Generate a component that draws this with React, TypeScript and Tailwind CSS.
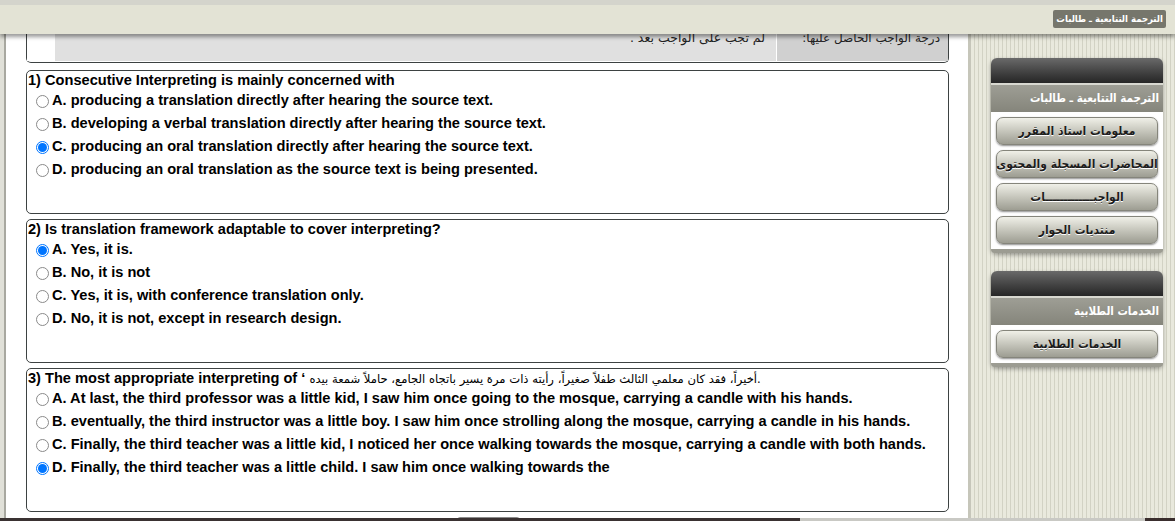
import React from "react";

type Q = { title: React.ReactNode; options: string[]; checked: number };

const questions: Q[] = [
  {
    title: "1) Consecutive Interpreting is mainly concerned with",
    options: [
      "A. producing a translation directly after hearing the source text.",
      "B. developing a verbal translation directly after hearing the source text.",
      "C. producing an oral translation directly after hearing the source text.",
      "D. producing an oral translation as the source text is being presented.",
    ],
    checked: 2,
  },
  {
    title: "2) Is translation framework adaptable to cover interpreting?",
    options: [
      "A. Yes, it is.",
      "B. No, it is not",
      "C. Yes, it is, with conference translation only.",
      "D. No, it is not, except in research design.",
    ],
    checked: 0,
  },
  {
    title: (
      <>
        3) The most appropriate interpreting of ‘{" "}
        <span className="font-normal text-[11.6px] font-['DejaVu_Sans',sans-serif]">
          أخيراً، فقد كان معلمي الثالث طفلاً صغيراً، رأيته ذات مرة يسير باتجاه الجامع، حاملاً شمعة بيده.
        </span>
      </>
    ),
    options: [
      "A. At last, the third professor was a little kid, I saw him once going to the mosque, carrying a candle with his hands.",
      "B. eventually, the third instructor was a little boy. I saw him once strolling along the mosque, carrying a candle in his hands.",
      "C. Finally, the third teacher was a little kid, I noticed her once walking towards the mosque, carrying a candle with both hands.",
      "D. Finally, the third teacher was a little child. I saw him once walking towards the",
    ],
    checked: 3,
  },
];

function Radio({ checked }: { checked: boolean }) {
  return checked ? (
    <span className="w-[13px] h-[13px] rounded-full border border-[#0075ff] bg-white flex items-center justify-center shrink-0">
      <span className="w-[9px] h-[9px] rounded-full bg-[#0075ff]" />
    </span>
  ) : (
    <span className="w-[13px] h-[13px] rounded-full border border-[#8a8a8a] bg-white shrink-0" />
  );
}

function QuestionBox({ q }: { q: Q }) {
  return (
    <div className="w-[923px] h-[144px] ml-[26px] border border-[#3d4242] rounded-[5px] bg-white">
      <div className="pl-[1px] leading-[18px] h-[18px] text-[14.6px] font-bold text-black whitespace-nowrap">
        {q.title}
      </div>
      {q.options.map((o, i) => (
        <div key={i} className="h-[23px] flex items-center pl-[9px] pt-[1px] text-[14.6px] font-bold text-black whitespace-nowrap">
          <Radio checked={i === q.checked} />
          <span className="ml-[3px]">{o}</span>
        </div>
      ))}
    </div>
  );
}

function SideButton({ label }: { label: string }) {
  return (
    <div className="h-[28px] rounded-[7px] border border-[#85857b] bg-linear-to-b from-[#f0f0e8] via-[#c6c6bc] to-[#9d9d92] shadow-[0_1px_2px_rgba(0,0,0,0.45)] flex items-center justify-center text-[12px] font-bold text-[#1c1c1c] [text-shadow:0_1px_0_#ffffff] whitespace-nowrap font-['DejaVu_Sans_Condensed','DejaVu_Sans',sans-serif]">
      {label}
    </div>
  );
}

function Panel({ title, buttons }: { title: string; buttons: string[] }) {
  return (
    <div className="w-[172px] rounded-[6px] shadow-[0_2px_4px_rgba(0,0,0,0.35)]">
      <div className="h-[25px] rounded-t-[6px] bg-linear-to-b from-[#6a6a6a] to-[#262626]" />
      <div className="h-[2px] bg-[#d8d8d0]" />
      <div dir="rtl" className="h-[27px] bg-linear-to-b from-[#9e9e95] to-[#85857b] flex items-center pr-[4px] text-[11.5px] font-bold text-white whitespace-nowrap font-['DejaVu_Sans_Condensed','DejaVu_Sans',sans-serif]">
        {title}
      </div>
      <div dir="rtl" className="bg-white px-[5px] pt-[5px] pb-[5px] flex flex-col gap-[5px]">
        {buttons.map((b) => (
          <SideButton key={b} label={b} />
        ))}
      </div>
      <div className="h-[4px] bg-[#9c9c92] rounded-b-[6px]" />
    </div>
  );
}

export default function App() {
  return (
    <div className="w-[1175px] h-[521px] overflow-hidden flex flex-col bg-white font-['Liberation_Sans','DejaVu_Sans',sans-serif]">
      {/* fixed header overlay */}
      <div className="fixed top-0 left-0 w-[1175px] h-[34px] border-t-[5px] border-[#d4d4cc] bg-[#e3e3d5] shadow-[0_3px_4px_rgba(0,0,0,0.4)] z-10 flex items-start justify-end pr-[9px] pt-[5px]">
        <div dir="rtl" className="h-[18px] px-[3px] bg-[#76766c] rounded-[2px] text-white text-[9.5px] font-bold leading-[18px] whitespace-nowrap font-['DejaVu_Sans_Condensed','DejaVu_Sans',sans-serif]">
          الترجمة التتابعية ـ طالبات
        </div>
      </div>

      <div className="flex flex-1 min-h-0">
        {/* main column */}
        <div className="w-[968px] shrink-0 bg-white shadow-[inset_4px_0_0_#e0e0d8,inset_6px_0_0_#a8a8a0] overflow-hidden">
          <div className="w-[923px] h-[63px] ml-[26px] border border-t-0 border-[#3d4242] rounded-b-[5px] flex pb-[1px]">
            <div className="w-[28px] bg-white" />
            <div dir="rtl" className="flex-1 bg-[#e0e0e0] pt-[30px] pr-[11px] text-[12.5px] leading-[16px] text-[#222] font-['DejaVu_Sans',sans-serif] whitespace-nowrap">
              لم تجب على الواجب بعد .
            </div>
            <div className="w-[1px] bg-white" />
            <div dir="rtl" className="w-[171px] bg-[#d0d0d0] pt-[30px] pr-[8px] text-[12px] leading-[16px] text-[#222] font-['DejaVu_Sans',sans-serif] whitespace-nowrap overflow-hidden">
              درجة الواجب الحاصل عليها:
            </div>
          </div>
          <div className="mt-[7px] flex flex-col gap-[5px]">
            {questions.map((q, i) => (
              <QuestionBox key={i} q={q} />
            ))}
          </div>
          <div className="mt-[5px] ml-[457px] w-[63px] h-[10px] rounded-t-[3px] border border-[#8a8a8a] bg-[#f4f4f4]" />
        </div>

        {/* sidebar */}
        <div className="flex-1 border-l-[3px] border-[#c6c6ba] bg-[repeating-linear-gradient(90deg,#e9e9dd_0px,#e9e9dd_3px,#d2d2c4_3px,#d2d2c4_4px)] pl-[20px] pt-[58px] flex flex-col gap-[18px]">
          <Panel
            title="الترجمة التتابعية ـ طالبات"
            buttons={["معلومات استاذ المقرر", "المحاضرات المسجلة والمحتوى", "الواجبـــــــــــــات", "منتديات الحوار"]}
          />
          <Panel title="الخدمات الطلابية" buttons={["الخدمات الطلابية"]} />
        </div>
      </div>

      <div className="h-[3px] flex shrink-0">
        <div className="w-[800px] bg-[#3a3232]" />
        <div className="w-[345px] bg-[#c9c9c4]" />
        <div className="flex-1 bg-[#3a2e2e]" />
      </div>
    </div>
  );
}
